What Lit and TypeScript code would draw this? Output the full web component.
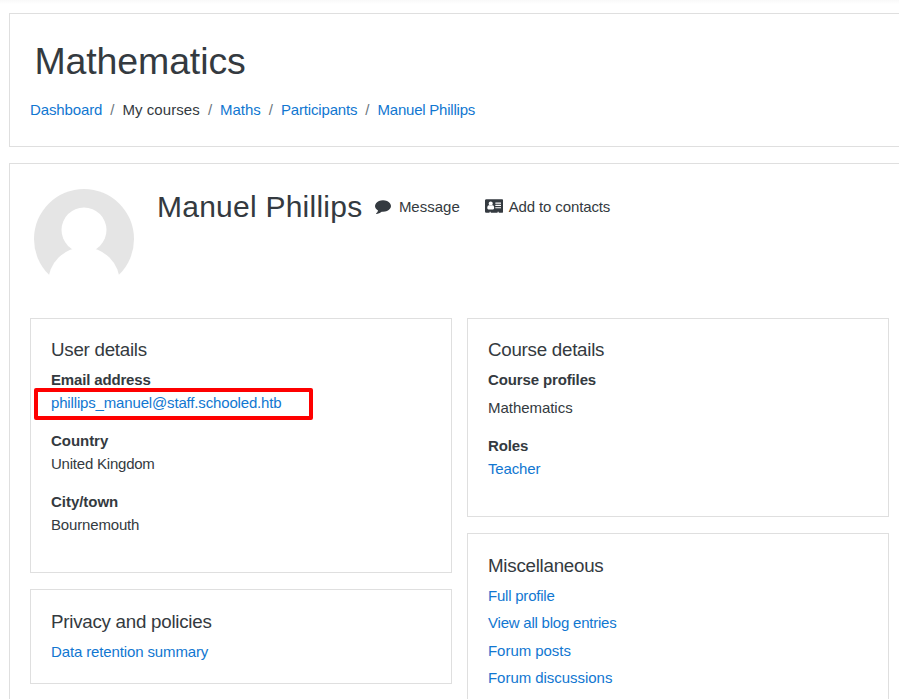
import { LitElement, html, css, svg } from "lit";
import { customElement } from "lit/decorators.js";

const commentIcon = svg`<path d="M1792 896q0 174-120 321.5t-326 233-450 85.5q-70 0-145-8-198 175-460 242-49 14-114 22-17 2-30.5-9t-17.5-29v-1q-3-4-.5-12t2-10 4.5-9.5l6-9 7-8.5 8-9q7-8 31-34.5t34.5-38 31-39.5 32.5-51 27-59 26-76q-157-89-247.5-220t-90.5-281q0-174 120-321.5t326-233 450-85.5 450 85.5 326 233 120 321.5z"/>`;

const cardIcon = svg`<path d="M1024 1131q0-64-9-117.5t-29.5-103-60.5-78-97-28.5q-6 4-30 18t-37.5 21.5-35.5 17.5-43 14.5-42 4.5-42-4.5-43-14.5-35.5-17.5-37.5-21.5-30-18q-57 0-97 28.5t-60.5 78-29.5 103-9 117.5 37 106.5 91 42.5h512q54 0 91-42.5t37-106.5zm-157-520q0-94-66.5-160.5t-160.5-66.5-160.5 66.5-66.5 160.5 66.5 160.5 160.5 66.5 160.5-66.5 66.5-160.5zm925 509v-64q0-14-9-23t-23-9h-576q-14 0-23 9t-9 23v64q0 14 9 23t23 9h576q14 0 23-9t9-23zm0-260v-56q0-15-10.5-25.5t-25.5-10.5h-568q-15 0-25.5 10.5t-10.5 25.5v56q0 15 10.5 25.5t25.5 10.5h568q15 0 25.5-10.5t10.5-25.5zm0-252v-64q0-14-9-23t-23-9h-576q-14 0-23 9t-9 23v64q0 14 9 23t23 9h576q14 0 23-9t9-23zm256-320v1216q0 66-47 113t-113 47h-352v-96q0-14-9-23t-23-9h-64q-14 0-23 9t-9 23v96h-768v-96q0-14-9-23t-23-9h-64q-14 0-23 9t-9 23v96h-352q-66 0-113-47t-47-113v-1216q0-66 47-113t113-47h1728q66 0 113 47t47 113z"/>`;

@customElement("app-root")
export class AppRoot extends LitElement {
  static styles = css`
    :host {
      display: block;
      height: 699px;
      overflow: hidden;
      box-sizing: border-box;
      padding: 13px 0 0 9px;
      background: linear-gradient(#f9f9f9, #fff 4px);
      color: #343a40;
      font: 15px/22.5px "Liberation Sans", Arial, sans-serif;
    }
    * { box-sizing: border-box; }
    h1, h2, h3, dl, dt, dd, ul, ol { margin: 0; padding: 0; font-weight: 400; }
    ul, ol { list-style: none; }
    a { color: #1177d1; text-decoration: none; }
    .panel {
      width: 901px;
      border: 1px solid #dfdfdf;
      background: #fff;
      padding: 20px;
    }
    .header { height: 134px; padding-top: 24.5px; margin-bottom: 16px; }
    .title { font-size: 37.5px; line-height: 45px; padding-left: 4.4px; margin-bottom: 15px; letter-spacing: -0.12px; }
    .crumbs { display: flex; }
    .crumbs li + li::before { content: "/"; color: #6c757d; padding: 0 8px; letter-spacing: 0; }
    .main { height: 700px; padding-top: 25px; }
    .profile { display: flex; align-items: flex-start; height: 129px; padding-left: 4px; }
    .avatar { width: 100px; height: 100px; margin-right: 23px; }
    .name { font-size: 30px; line-height: 36px; margin-right: 12.5px; white-space: nowrap; letter-spacing: 0.24px; }
    .action { display: flex; padding-top: 7px; margin-right: 24.8px; white-space: nowrap; }
    .icon { height: 16px; margin-top: 2px; fill: #343a40; flex: none; }
    .comment { width: 16px; margin-right: 8px; }
    .vcard { width: 18.3px; margin-right: 5.9px; }
    .columns { display: flex; gap: 15px; align-items: flex-start; }
    .column { width: 422px; display: flex; flex-direction: column; gap: 16px; }
    .card { border: 1px solid #dfdfdf; background: #fff; padding: 20px; }
    .low { padding-top: 20.6px; }
    .tall { min-height: 200px; }
    .heading { font-size: 18.75px; line-height: 22.5px; margin-bottom: 7.5px; letter-spacing: -0.26px; }
    dt { font-weight: 700; }
    dd { margin-bottom: 16px; }
    .spaced { padding-top: 5px; }
    .links li + li { margin-top: 5px; }
    .wide { letter-spacing: 0.08px; }
    .snug { letter-spacing: -0.04px; }
    .tight { letter-spacing: -0.13px; }
    .tighter { letter-spacing: -0.16px; }
    .tightest { letter-spacing: -0.22px; }
    .marked { position: relative; }
    .mark {
      position: absolute;
      left: -17.4px;
      top: -4px;
      width: 279.4px;
      height: 32.5px;
      border: 4px solid #fe0000;
      border-radius: 2px;
    }
  `;

  render() {
    return html`
      <header class="panel header">
        <h1 class="title">Mathematics</h1>
        <ol class="crumbs">
          <li><a class="tight">Dashboard</a></li>
          <li class="wide">My courses</li>
          <li><a class="snug">Maths</a></li>
          <li><a class="tighter">Participants</a></li>
          <li><a class="tightest">Manuel Phillips</a></li>
        </ol>
      </header>
      <main class="panel main">
        <div class="profile">
          <svg class="avatar" viewBox="0 0 100 100">
            <circle cx="50" cy="50" r="50" fill="#e5e5e5" />
            <circle cx="50" cy="41" r="22.5" fill="#fff" />
            <circle cx="50" cy="94" r="36" fill="#fff" />
          </svg>
          <h2 class="name">Manuel Phillips</h2>
          <div class="action"><svg class="icon comment" viewBox="0 0 1792 1792">${commentIcon}</svg>Message</div>
          <div class="action tight"><svg class="icon vcard" viewBox="0 0 2048 1792">${cardIcon}</svg>Add to contacts</div>
        </div>
        <div class="columns">
          <div class="column">
            <section class="card">
              <h3 class="heading">User details</h3>
              <dl>
                <dt class="tighter">Email address</dt>
                <dd class="marked"><a class="tighter">phillips_manuel@staff.schooled.htb</a><span class="mark"></span></dd>
                <dt class="snug">Country</dt>
                <dd class="tightest">United Kingdom</dd>
                <dt class="snug">City/town</dt>
                <dd class="tighter">Bournemouth</dd>
              </dl>
            </section>
            <section class="card low">
              <h3 class="heading">Privacy and policies</h3>
              <ul class="links"><li><a class="tight">Data retention summary</a></li></ul>
            </section>
          </div>
          <div class="column">
            <section class="card">
              <h3 class="heading">Course details</h3>
              <dl>
                <dt class="tight">Course profiles</dt>
                <dd class="spaced snug">Mathematics</dd>
                <dt class="tight">Roles</dt>
                <dd><a class="tighter">Teacher</a></dd>
              </dl>
            </section>
            <section class="card low tall">
              <h3 class="heading">Miscellaneous</h3>
              <ul class="links">
                <li><a class="tightest">Full profile</a></li>
                <li><a class="tightest">View all blog entries</a></li>
                <li><a class="snug">Forum posts</a></li>
                <li><a class="snug">Forum discussions</a></li>
              </ul>
            </section>
          </div>
        </div>
      </main>
    `;
  }
}
